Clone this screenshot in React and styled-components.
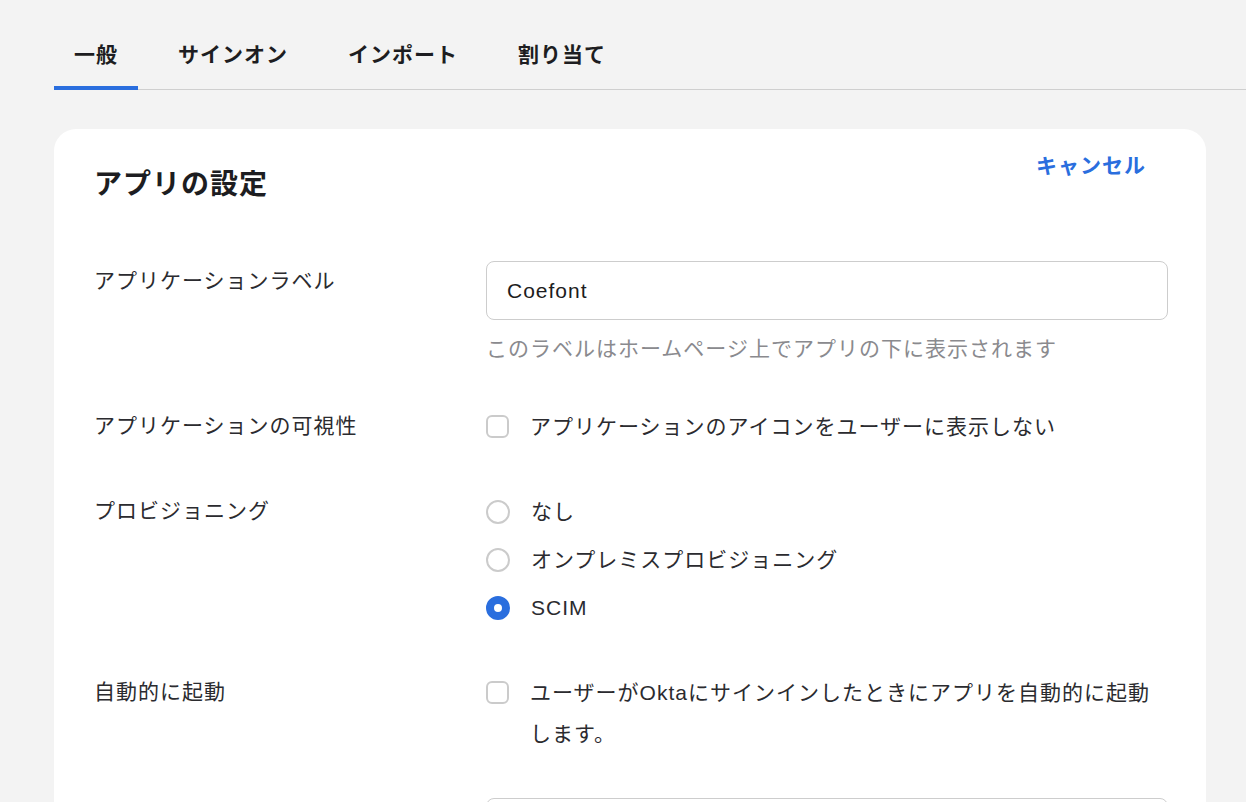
import React, { useState } from "react";
import styled, { createGlobalStyle } from "styled-components";

const GlobalStyle = createGlobalStyle`
  html, body {
    margin: 0;
    padding: 0;
    background: #f3f3f3;
    overflow: hidden;
  }
  body {
    font-family: "Liberation Sans", "Noto Sans CJK JP", sans-serif;
    color: #1d1d21;
  }
`;

const Page = styled.div`
  padding: 28px 0 0 54px;
`;

const Tabs = styled.nav`
  display: flex;
  gap: 20px;
  border-bottom: 1px solid #cfcfcf;
`;

const Tab = styled.button`
  display: flex;
  align-items: flex-start;
  border: 0;
  background: none;
  padding: 12px 20px 0;
  height: 62px;
  font: inherit;
  font-size: 21px;
  line-height: 30px;
  letter-spacing: 1px;
  font-weight: 700;
  color: #1d1d21;
  cursor: pointer;
  box-shadow: ${(p) => (p.$active ? "inset 0 -4px 0 #2a6ede" : "none")};
  margin-bottom: -1px;
`;

const Card = styled.section`
  margin-top: 39px;
  width: 1152px;
  background: #fff;
  border-radius: 22px;
  padding: 22px 38px 40px 40px;
  box-sizing: border-box;
  min-height: 800px;
`;

const Header = styled.header`
  display: flex;
  justify-content: space-between;
  align-items: flex-start;
`;

const Title = styled.h2`
  margin: 16px 0 0;
  font-size: 28px;
  line-height: 36px;
  letter-spacing: 1px;
  font-weight: 700;
`;

const Cancel = styled.a`
  color: #2a6ede;
  font-size: 21px;
  line-height: 30px;
  letter-spacing: 1px;
  font-weight: 700;
  margin-right: 22px;
  cursor: pointer;
`;

const Form = styled.div`
  margin-top: 58px;
  display: flex;
  flex-direction: column;
  gap: 44px;
`;

const Row = styled.div`
  display: grid;
  grid-template-columns: 392px 1fr;
  align-items: start;
`;

const Label = styled.div`
  padding-top: 5px;
  font-size: 21px;
  line-height: 30px;
  letter-spacing: 1px;
  color: #2b2b2f;
`;

const Input = styled.input`
  box-sizing: border-box;
  width: 100%;
  height: 59px;
  border: 1px solid #cdcdcd;
  border-radius: 8px;
  padding: 0 20px;
  font: inherit;
  font-size: 21px;
  letter-spacing: 1px;
  color: #1d1d21;
  outline: none;
`;

const Help = styled.p`
  margin: 15px 0 0;
  font-size: 21px;
  line-height: 27px;
  letter-spacing: 1px;
  color: #8a8a8e;
`;

const Options = styled.div`
  display: flex;
  flex-direction: column;
  gap: 7px;
`;

const Option = styled.label`
  display: flex;
  align-items: flex-start;
  gap: 21px;
  font-size: 21px;
  line-height: 41px;
  letter-spacing: 1px;
  color: #2b2b2f;
  cursor: pointer;
`;

const Box = styled.span`
  flex: none;
  width: 23px;
  height: 23px;
  margin-top: 9px;
  box-sizing: border-box;
  border: 2px solid #cbcbcb;
  border-radius: 6px;
  background: #fff;
`;

const Radio = styled.span`
  flex: none;
  width: 24px;
  height: 24px;
  margin-top: 8.5px;
  box-sizing: border-box;
  border-radius: 50%;
  border: ${(p) => (p.$on ? "8px solid #2a6ede" : "2px solid #cbcbcb")};
  background: #fff;
`;

const tabs = ["一般", "サインオン", "インポート", "割り当て"];
const provisioning = ["なし", "オンプレミスプロビジョニング", "SCIM"];

export default function App() {
  const [tab, setTab] = useState(0);
  const [prov, setProv] = useState(2);

  return (
    <Page>
      <GlobalStyle />
      <Tabs>
        {tabs.map((t, i) => (
          <Tab key={t} $active={i === tab} onClick={() => setTab(i)}>
            {t}
          </Tab>
        ))}
      </Tabs>

      <Card>
        <Header>
          <Title>アプリの設定</Title>
          <Cancel>キャンセル</Cancel>
        </Header>

        <Form>
          <Row>
            <Label>アプリケーションラベル</Label>
            <div>
              <Input defaultValue="Coefont" />
              <Help>このラベルはホームページ上でアプリの下に表示されます</Help>
            </div>
          </Row>

          <Row>
            <Label>アプリケーションの可視性</Label>
            <Option>
              <Box />
              アプリケーションのアイコンをユーザーに表示しない
            </Option>
          </Row>

          <Row>
            <Label>プロビジョニング</Label>
            <Options>
              {provisioning.map((p, i) => (
                <Option key={p} onClick={() => setProv(i)}>
                  <Radio $on={i === prov} />
                  {p}
                </Option>
              ))}
            </Options>
          </Row>

          <Row>
            <Label>自動的に起動</Label>
            <Option>
              <Box />
              <span>ユーザーがOktaにサインインしたときにアプリを自動的に起動します。</span>
            </Option>
          </Row>

          <Row>
            <Label />
            <Input />
          </Row>
        </Form>
      </Card>
    </Page>
  );
}
